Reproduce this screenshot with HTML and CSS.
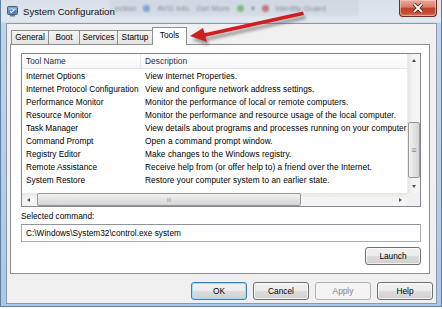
FILE: index.html
```html
<!DOCTYPE html>
<html lang="en">
<head>
    <meta charset="UTF-8">
    <meta name="viewport" content="width=device-width, initial-scale=1.0">
    <title>System Configuration</title>
    <link rel="stylesheet" href="styles.css">
</head>
<body>
    <div class="window">
        <!-- blurred taskbar seen through the glass frame -->
        <div class="backdrop">
            <span>ection</span>
            <i class="blob blue"></i>
            <span>AVG Info</span>
            <span>Get More</span>
            <i class="blob green"></i>
            <span>&#9662;</span>
            <i class="blob red"></i>
            <span>Identity Guard</span>
        </div>

        <div class="titlebar">
            <svg class="app-icon" width="11" height="11" viewBox="0 0 11 11">
                <rect x="0.5" y="0.5" width="10" height="8" rx="1" fill="#8a97a8" stroke="#4f5d70"/>
                <rect x="1.5" y="1.5" width="8" height="6" fill="#3f7fd6"/>
                <rect x="1.5" y="1.5" width="8" height="2.5" fill="#8fbff2"/>
                <path d="M3 5 l1.5 1.5 l3 -3" stroke="#fff" stroke-width="1.2" fill="none"/>
                <rect x="3" y="9" width="5" height="1.5" fill="#6f7c8c"/>
            </svg>
            <span class="title">System Configuration</span>
            <button class="close">
                <svg width="12" height="10" viewBox="0 0 12 10">
                    <path d="M2 1 L10 9 M10 1 L2 9" stroke="#3b1a14" stroke-width="3.4"/>
                    <path d="M2 1 L10 9 M10 1 L2 9" stroke="#fff" stroke-width="1.8"/>
                </svg>
            </button>
        </div>

        <div class="client">
            <div class="tabs">
                <div class="tab w-general">General</div>
                <div class="tab w-boot">Boot</div>
                <div class="tab w-services">Services</div>
                <div class="tab w-startup">Startup</div>
                <div class="tab w-tools active">Tools</div>
            </div>

            <div class="panel">
                <div class="list">
                    <div class="list-main">
                        <div class="viewport">
                            <div class="row head">
                                <span class="c1">Tool Name</span>
                                <span class="c2">Description</span>
                            </div>
                            <div class="row"><span class="c1">Internet Options</span><span class="c2">View Internet Properties.</span></div>
                            <div class="row"><span class="c1">Internet Protocol Configuration</span><span class="c2">View and configure network address settings.</span></div>
                            <div class="row"><span class="c1">Performance Monitor</span><span class="c2">Monitor the performance of local or remote computers.</span></div>
                            <div class="row"><span class="c1">Resource Monitor</span><span class="c2">Monitor the performance and resource usage of the local computer.</span></div>
                            <div class="row"><span class="c1">Task Manager</span><span class="c2">View details about programs and processes running on your computer.</span></div>
                            <div class="row"><span class="c1">Command Prompt</span><span class="c2">Open a command prompt window.</span></div>
                            <div class="row"><span class="c1">Registry Editor</span><span class="c2">Make changes to the Windows registry.</span></div>
                            <div class="row"><span class="c1">Remote Assistance</span><span class="c2">Receive help from (or offer help to) a friend over the Internet.</span></div>
                            <div class="row"><span class="c1">System Restore</span><span class="c2">Restore your computer system to an earlier state.</span></div>
                        </div>
                        <div class="vscroll">
                            <div class="arrow-btn"><i class="tri up"></i></div>
                            <div class="track v-track">
                                <div class="thumb v-thumb"><span class="grip">&#8801;</span></div>
                            </div>
                            <div class="arrow-btn"><i class="tri down"></i></div>
                        </div>
                    </div>
                    <div class="hbar">
                        <div class="hscroll">
                            <div class="arrow-btn"><i class="tri left"></i></div>
                            <div class="track h-track">
                                <div class="thumb h-thumb"><span class="grip">III</span></div>
                            </div>
                            <div class="arrow-btn"><i class="tri right"></i></div>
                        </div>
                        <div class="corner"></div>
                    </div>
                </div>

                <div class="label">Selected command:</div>
                <div class="field">C:\Windows\System32\control.exe system</div>
                <div class="launch-row">
                    <button class="btn">Launch</button>
                </div>
            </div>

            <div class="buttons">
                <button class="btn default">OK</button>
                <button class="btn">Cancel</button>
                <button class="btn disabled">Apply</button>
                <button class="btn">Help</button>
            </div>
        </div>

        <svg class="callout" width="442" height="60" viewBox="0 0 442 60">
            <defs>
                <filter id="soft" x="-20%" y="-50%" width="140%" height="200%">
                    <feGaussianBlur stdDeviation="1.6"/>
                </filter>
            </defs>
            <g fill="#5c5c5c" opacity="0.55" filter="url(#soft)" transform="translate(2 4)">
                <path d="M303 11.5 L304 15 L204 37 L203 33.5 Z"/>
                <path d="M190 36 L203 28 L207 42 Z"/>
            </g>
            <g fill="#d01f1f">
                <path d="M303 11.5 L304 15 L204 37 L203 33.5 Z"/>
                <path d="M190 36 L203 28 L207 42 Z"/>
            </g>
        </svg>
    </div>
</body>
</html>
```

FILE: styles.css
```css
* {
    box-sizing: border-box;
}

body {
    margin: 0;
    background: #fff;
    font-family: "Liberation Sans", Arial, sans-serif;
    font-size: 8.3px;
    color: #000;
}

button {
    font-family: inherit;
    font-size: inherit;
}

.window {
    position: relative;
    width: 442px;
    height: 307px;
    border: 1px solid #61809f;
    border-top: none;
    background: linear-gradient(to bottom, #d8e0e9 0, #e2e8ef 22px, #bcd5ee 23px, #a9c8e9 100%);
}

/* glass title area */
.backdrop {
    position: absolute;
    top: 0;
    left: 108px;
    width: 250px;
    height: 16px;
    display: flex;
    align-items: center;
    gap: 7px;
    padding: 0 6px;
    background: rgba(160, 172, 188, 0.25);
    filter: blur(1px);
    color: #4d5b6c;
    font-size: 8px;
    opacity: 0.65;
}

.blob {
    width: 7px;
    height: 7px;
    border-radius: 50%;
}

.blob.blue { background: #4a7fc0; }
.blob.green { background: #4ca54c; }
.blob.red { background: #b23b3b; }

.titlebar {
    position: relative;
    height: 23px;
    display: flex;
    align-items: center;
}

.app-icon {
    margin-left: 6px;
    margin-top: -1px;
}

.title {
    margin-left: 5px;
    font-size: 9.6px;
    color: #111;
}

.close {
    margin-left: auto;
    margin-right: 4px;
    align-self: flex-start;
    width: 38px;
    height: 17px;
    padding: 0;
    border: 1px solid #6e2d22;
    border-top: none;
    border-radius: 0 0 4px 4px;
    background: linear-gradient(to bottom, #e8a898 0%, #d7806c 45%, #c0402a 50%, #c54b33 80%, #d77a5a 100%);
    box-shadow: inset 0 0 0 1px rgba(255, 220, 210, 0.5);
    display: flex;
    align-items: center;
    justify-content: center;
}

.client {
    margin-left: 5px;
    width: 431px;
    height: 281px;
    border: 1px solid #8d99a6;
    background: #f0f0f0;
}

/* tabs */
.tabs {
    display: flex;
    align-items: flex-end;
    height: 20px;
    padding-left: 4px;
    position: relative;
    z-index: 1;
}

.tab {
    height: 14px;
    margin-left: -1px;
    border: 1px solid #8c8e94;
    border-bottom: none;
    background: linear-gradient(to bottom, #f4f4f4, #e4e4e4);
    text-align: center;
    line-height: 12px;
}

.tab:first-child {
    margin-left: 0;
}

.tab.active {
    height: 18px;
    margin-bottom: -1px;
    background: #fff;
    line-height: 15px;
}

.w-general { width: 38px; }
.w-boot { width: 32px; }
.w-services { width: 39px; }
.w-startup { width: 36px; }
.w-tools { width: 35px; }

.panel {
    margin-left: 3px;
    width: 420px;
    height: 230px;
    border: 1px solid #8c8e94;
    background: #fff;
    padding: 8px 8px 0 10px;
}

/* list view */
.list {
    width: 400px;
    height: 154px;
    border: 1px solid #828790;
    display: flex;
    flex-direction: column;
}

.list-main {
    display: flex;
    height: 139px;
}

.viewport {
    width: 385px;
    overflow: hidden;
}

.row {
    display: flex;
    height: 13px;
    line-height: 13px;
    white-space: nowrap;
}

.row.head {
    height: 15px;
    line-height: 14px;
    border-bottom: 1px solid #e5e5e5;
    background: linear-gradient(to bottom, #fff, #f6f7f9);
    color: #1f2d3d;
    margin-bottom: 1px;
}

.c1 {
    flex: 0 0 119px;
    padding-left: 4px;
    overflow: hidden;
}

.head .c1 {
    border-right: 1px solid #e3e8ee;
}

.c2 {
    padding-left: 4px;
    letter-spacing: 0.06px;
}

.vscroll {
    width: 13px;
    display: flex;
    flex-direction: column;
    background: linear-gradient(to right, #e6e6e6, #f4f4f4 40%, #f4f4f4);
    border-left: 1px solid #ececec;
}

.arrow-btn {
    flex: 0 0 13px;
    display: flex;
    align-items: center;
    justify-content: center;
}

.track {
    flex: 1;
    display: flex;
}

.v-track {
    flex-direction: column;
    padding-top: 55px;
}

.thumb {
    border: 1px solid #979797;
    border-radius: 2px;
    display: flex;
    align-items: center;
    justify-content: center;
    color: #8a8a8a;
}

.v-thumb {
    height: 56px;
    background: linear-gradient(to right, #f2f2f2, #e3e3e3 50%, #d5d5d5);
    font-size: 9px;
}

.hbar {
    display: flex;
    height: 13px;
}

.hscroll {
    width: 385px;
    display: flex;
    background: linear-gradient(to bottom, #e6e6e6, #f4f4f4 40%, #f4f4f4);
}

.h-track {
    padding-left: 2px;
}

.h-thumb {
    width: 264px;
    background: linear-gradient(to bottom, #f2f2f2, #e3e3e3 50%, #d5d5d5);
    font-size: 5px;
}

.corner {
    flex: 1;
    background: #f0f0f0;
}

.tri {
    width: 0;
    height: 0;
    border: 2.5px solid transparent;
}

.tri.up { border-bottom: 3px solid #505050; border-top: none; }
.tri.down { border-top: 3px solid #505050; border-bottom: none; }
.tri.left { border-right: 3px solid #505050; border-left: none; }
.tri.right { border-left: 3px solid #505050; border-right: none; }

/* command */
.label {
    margin-top: 3px;
    line-height: 13px;
}

.field {
    margin-top: 1px;
    width: 400px;
    height: 18px;
    border: 1px solid #abadb3;
    border-top-color: #8f939c;
    padding-left: 4px;
    line-height: 16px;
}

.launch-row {
    display: flex;
    justify-content: flex-end;
    margin-top: 5px;
    width: 400px;
}

.btn {
    width: 56px;
    height: 18px;
    padding: 0;
    border: 1px solid #707070;
    border-radius: 3px;
    background: linear-gradient(to bottom, #f2f2f2 0%, #ebebeb 50%, #dddddd 51%, #cfcfcf 100%);
    box-shadow: inset 0 0 0 1px rgba(255, 255, 255, 0.7);
    color: #000;
}

.btn.default {
    border-color: #3c7fb1;
    box-shadow: inset 0 0 0 1px #9fdcf7;
}

.btn.disabled {
    border-color: #adb2b5;
    background: #f4f4f4;
    box-shadow: none;
    color: #838383;
}

.buttons {
    display: flex;
    justify-content: flex-end;
    gap: 6px;
    margin-top: 8px;
    padding-right: 3px;
}

.callout {
    position: absolute;
    top: 0;
    left: -1px;
    pointer-events: none;
}
```
